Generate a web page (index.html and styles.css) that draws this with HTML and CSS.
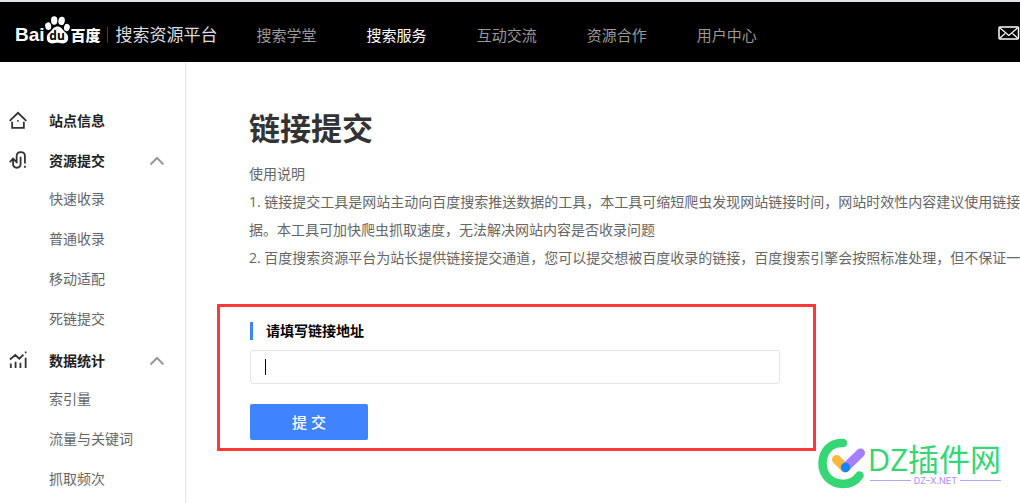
FILE: index.html
```html
<!DOCTYPE html>
<html lang="zh-CN">
<head>
<meta charset="utf-8">
<title>链接提交 - 搜索资源平台</title>
<link rel="stylesheet" href="styles.css">
</head>
<body>
<header class="topbar">
  <a class="brand" href="#">
    <span class="brand-bai">Bai</span>
    <span class="paw">
      <svg class="paw-shape" width="25" height="28" viewBox="0 0 25 28" aria-hidden="true">
        <ellipse cx="3.2" cy="10.2" rx="3" ry="3.9" transform="rotate(-12 3.2 10.2)"/>
        <ellipse cx="9.2" cy="4.5" rx="3.2" ry="4.2"/>
        <ellipse cx="16.6" cy="4.9" rx="3.2" ry="4.2" transform="rotate(10 16.6 4.9)"/>
        <ellipse cx="21.9" cy="11.5" rx="2.9" ry="3.7" transform="rotate(12 21.9 11.5)"/>
        <path d="M12.500 10.500c3.200 0 4.600 2.400 6.200 4.200 2 2.100 4.500 3.500 4.500 7 0 3.800-2.600 5.900-5.800 5.700-1.800-.1-2.900-.6-4.900-.6s-3.100.5-4.900.6c-3.200.2-5.800-1.900-5.800-5.700 0-3.500 2.500-4.900 4.500-7 1.600-1.800 3-4.200 6.200-4.200z"/>
      </svg>
      <span class="paw-text">du</span>
    </span>
    <span class="brand-baidu">百度</span>
    <span class="brand-product">搜索资源平台</span>
  </a>
  <nav class="nav">
    <a href="#">搜索学堂</a>
    <a class="current" href="#">搜索服务</a>
    <a href="#">互动交流</a>
    <a href="#">资源合作</a>
    <a href="#">用户中心</a>
  </nav>
  <a class="mail" href="#" aria-label="消息">
    <svg width="22" height="14" viewBox="0 0 22 14" fill="none" stroke="#fff" stroke-width="1.5">
      <rect x="1" y="1" width="19.5" height="12" rx="1"/>
      <path d="M2 2l8.800 7.500L19.500 2M2 12l5-4.500M19.500 12l-5-4.500" stroke-width="1.2"/>
    </svg>
  </a>
</header>
<div class="page">
  <aside class="sidebar">
    <a class="group" href="#">
      <svg class="group-icon" viewBox="0 0 20 20"><path d="M.8 11L10 2l9.200 9M3.500 12v6.800h13V12"/><path d="M9.200 11h1.600"/></svg>
      站点信息
    </a>
    <a class="group" href="#">
      <svg class="group-icon" viewBox="0 0 20 20"><path d="M4.500 9v5c0 2.800 1.600 4.600 4.200 4.600s4.200-1.800 4.200-4.600V6.500M8.500 13.500V5.500c0-2.600 1.800-4.200 4.600-4.200s4.600 1.600 4.600 4.200V14M17.700 16.500v2M.8 12.500L4.500 8.500l3.700 3.500"/></svg>
      资源提交
      <svg class="chevron" viewBox="0 0 16 10"><path d="M1.500 8.500L8 2l6.500 6.500"/></svg>
    </a>
    <ul class="sub">
      <li><a href="#">快速收录</a></li>
      <li><a href="#">普通收录</a></li>
      <li><a href="#">移动适配</a></li>
      <li><a href="#">死链提交</a></li>
    </ul>
    <a class="group" href="#">
      <svg class="group-icon" viewBox="0 0 20 20"><path d="M2 14v5M7.300 12v7M12.700 13v6M18.500 7.500V19M1 9.500l6-5 4.500 4L16 4M17.600 1.500h1.800"/></svg>
      数据统计
      <svg class="chevron" viewBox="0 0 16 10"><path d="M1.500 8.500L8 2l6.500 6.500"/></svg>
    </a>
    <ul class="sub">
      <li><a href="#">索引量</a></li>
      <li><a href="#">流量与关键词</a></li>
      <li><a href="#">抓取频次</a></li>
    </ul>
  </aside>
  <main class="main">
    <h1>链接提交</h1>
    <div class="notes">
      <p>使用说明</p>
      <p>1. 链接提交工具是网站主动向百度搜索推送数据的工具，本工具可缩短爬虫发现网站链接时间，网站时效性内容建议使用链接<br>据。本工具可加快爬虫抓取速度，无法解决网站内容是否收录问题</p>
      <p>2. 百度搜索资源平台为站长提供链接提交通道，您可以提交想被百度收录的链接，百度搜索引擎会按照标准处理，但不保证一</p>
    </div>
    <form class="submit-box">
      <label for="url">请填写链接地址</label>
      <div class="field">
        <input id="url" type="text">
        <span class="caret"></span>
      </div>
      <button type="button">提 交</button>
    </form>
  </main>
</div>
<div class="watermark">
  <svg width="48" height="51" viewBox="0 0 48 51" fill="none" stroke-linecap="round" aria-hidden="true">
    <path d="M25 5C13 4 4.500 13 4.500 25.500S14 46 25 46c7 0 13-3.500 16.500-8.500" stroke="#35d673" stroke-width="8.5"/>
    <path d="M18.500 21.500l8.500 8.500" stroke="#ffb83d" stroke-width="9"/>
    <path d="M27.500 29.500L42.500 15" stroke="#a47fff" stroke-width="9"/>
    <circle cx="27.5" cy="29.5" r="4.7" fill="#1584ff"/>
  </svg>
  <div class="watermark-words">
    <span class="watermark-name">DZ插件网</span>
    <span class="watermark-site">DZ–X.NET</span>
  </div>
</div>
</body>
</html>
```
FILE: styles.css
```css
* {
  box-sizing: border-box;
}

body {
  margin: 0;
  min-height: 100vh;
  display: flex;
  flex-direction: column;
  overflow: hidden;
  background: #fff;
  color: #666;
  font: 14px/28px "Open Sans", "Noto Sans CJK SC", sans-serif;
}

a {
  color: inherit;
  text-decoration: none;
}

.topbar {
  display: flex;
  align-items: center;
  height: 62px;
  padding: 6px 0 0 15px;
  border-top: 2px solid #dfe3e6;
  background: #000;
  color: #fff;
}

.brand {
  display: flex;
  align-items: center;
  white-space: nowrap;
}

.brand-bai {
  font-family: "Liberation Sans", sans-serif;
  font-size: 19px;
  font-weight: bold;
}

.paw {
  position: relative;
  display: flex;
  width: 25px;
  margin: 0 1px 10px 0;
}

.paw-shape {
  fill: #fff;
}

.paw-text {
  position: absolute;
  inset: 14px 0 0;
  color: #000;
  font-size: 12px;
  font-weight: bold;
  line-height: 12px;
  text-align: center;
}

.brand-baidu {
  font-size: 15px;
  font-weight: 900;
}

.brand-product {
  margin-left: 6px;
  padding-left: 8px;
  border-left: 1px solid #444;
  color: #ddd;
  font-size: 17px;
  line-height: 16px;
}

.nav {
  display: flex;
  gap: 50px;
  margin-left: 39px;
  color: #999;
  font-size: 15px;
  white-space: nowrap;
}

.nav .current {
  color: #fff;
}

.mail {
  display: flex;
  margin-left: auto;
  margin-bottom: 5px;
}

.page {
  display: flex;
  flex: 1;
}

.sidebar {
  flex: 0 0 186px;
  padding-top: 37px;
  border-right: 1px solid #e6e6e6;
}

.group {
  display: flex;
  align-items: center;
  height: 36px;
  margin-top: 4px;
  padding: 0 20px 0 9px;
  color: #222;
  font-weight: bold;
}

.group-icon {
  width: 18px;
  height: 18px;
  margin: 0 22px 2px 0;
  fill: none;
  stroke: #333;
  stroke-width: 2;
}

.chevron {
  width: 16px;
  height: 10px;
  margin-left: auto;
  fill: none;
  stroke: #999;
  stroke-width: 2;
}

.sub {
  margin: 0;
  padding: 0 0 0 49px;
  list-style: none;
  line-height: 40px;
}

.main {
  flex: 1;
  min-width: 0;
  padding: 46px 0 0 31px;
  overflow: hidden;
}

h1 {
  margin: 0 0 12px 32px;
  color: #333;
  font-size: 31px;
  line-height: 40px;
}

.notes {
  margin-left: 32px;
  white-space: nowrap;
}

.notes p {
  margin: 0;
}

.submit-box {
  width: 599px;
  max-width: 100%;
  margin-top: 32px;
  padding: 15px 33px 8px 30px;
  border: 3px solid #ff3838;
}

.submit-box label {
  display: block;
  padding-left: 13px;
  border-left: 3px solid #4083ff;
  color: #000;
  font-weight: bold;
  line-height: 18px;
}

.field {
  position: relative;
  margin: 10px 0 20px;
}

.field input {
  display: block;
  width: 100%;
  height: 34px;
  padding: 0 14px;
  border: 1px solid #e4e4e4;
  border-radius: 3px;
  background: #fff;
  font: inherit;
}

.caret {
  position: absolute;
  top: 9px;
  left: 15px;
  width: 1px;
  height: 16px;
  background: #000;
}

.submit-box button {
  display: block;
  width: 118px;
  height: 36px;
  border: 0;
  border-radius: 2px;
  background: #4083ff;
  color: #fff;
  font: 500 15px/36px "Liberation Sans", "Noto Sans CJK SC", sans-serif;
}

.watermark {
  position: absolute;
  right: 19px;
  bottom: 14px;
  display: flex;
  align-items: center;
  gap: 2px;
}

.watermark-words {
  display: flex;
  flex-direction: column;
}

.watermark-name {
  color: #35d673;
  font: 31px/34px "Open Sans", "Noto Sans CJK SC", sans-serif;
}

.watermark-site {
  display: flex;
  align-items: center;
  gap: 3px;
  margin-left: 2px;
  color: #ab8cf5;
  font: 9px/10px "Inter", sans-serif;
}

.watermark-site::before,
.watermark-site::after {
  content: "";
  flex: 1;
  height: 1px;
  background: #b9a2fa;
}
```
